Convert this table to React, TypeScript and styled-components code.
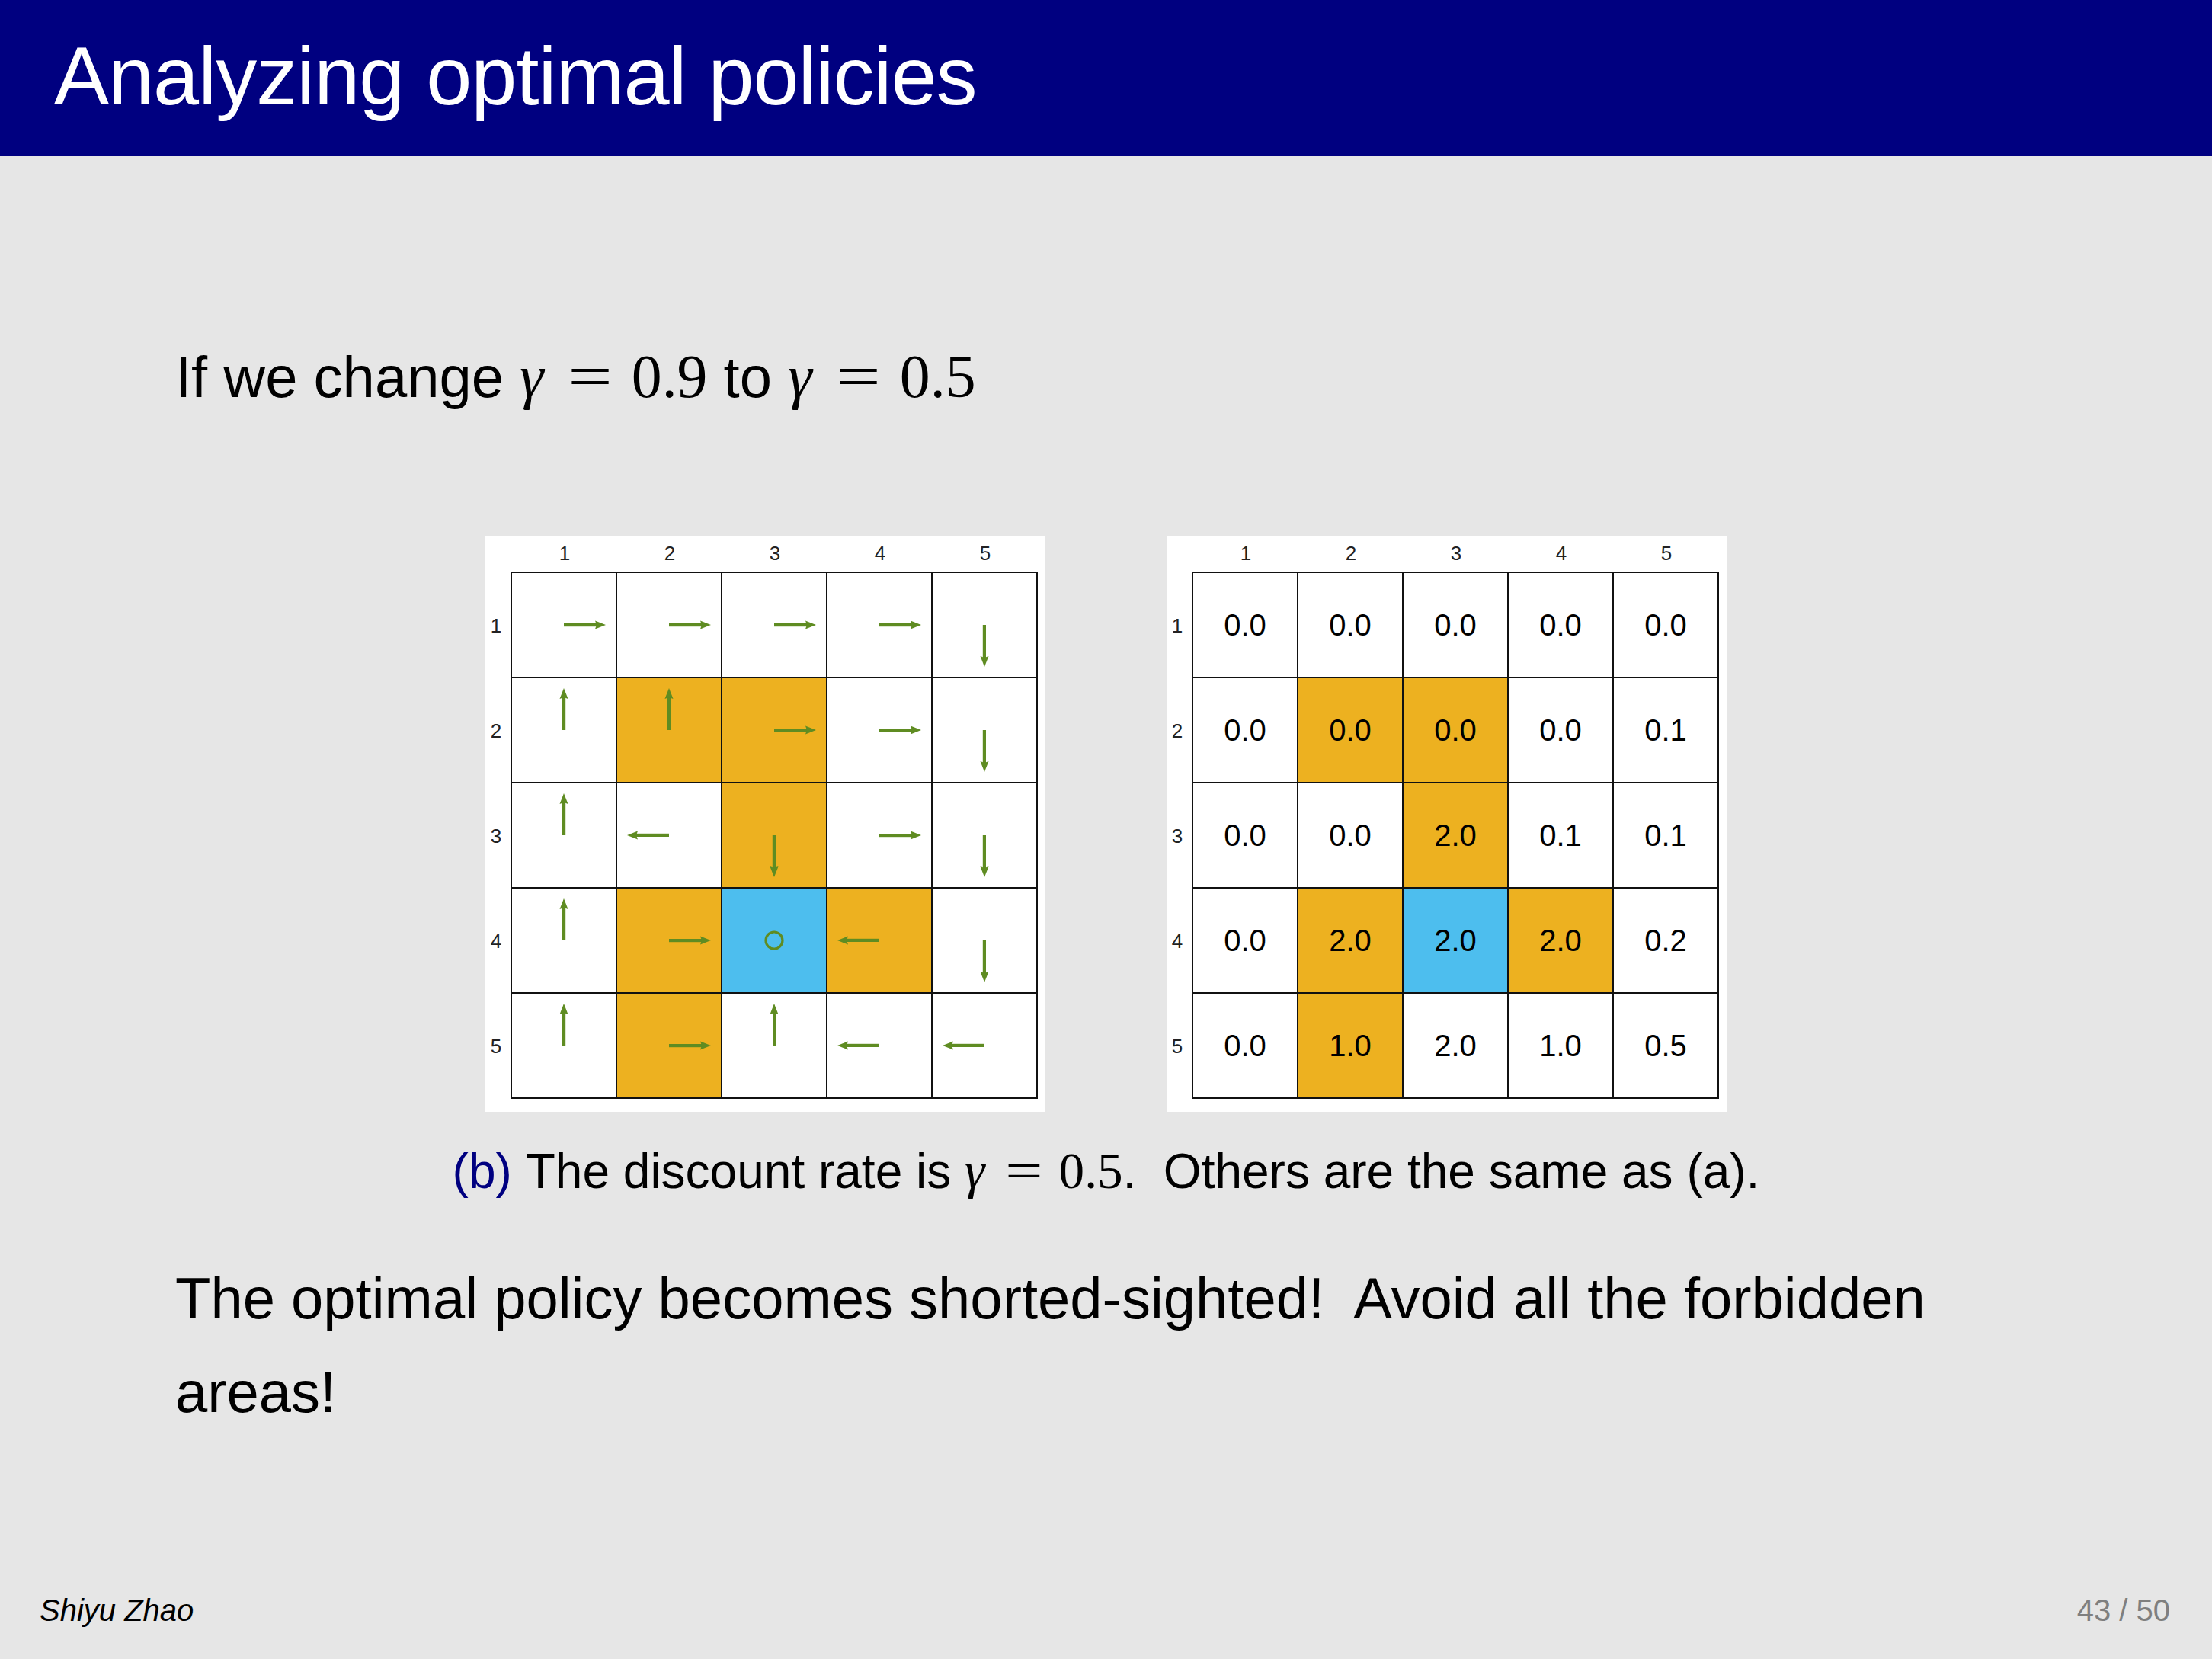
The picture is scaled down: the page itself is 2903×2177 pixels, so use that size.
import styled, { createGlobalStyle } from 'styled-components';

const GlobalStyle = createGlobalStyle`
  body {
    margin: 0;
    background: #e6e6e6;
  }
`;

const sans = `'Liberation Sans', Arial, sans-serif`;
const serif = `'Liberation Serif', 'Times New Roman', serif`;

const ORANGE = '#edb120';
const BLUE = '#4dbeee';
const GREEN = '#5f8c22';

const Slide = styled.div`
  display: flex;
  flex-direction: column;
  min-height: 100vh;
  font-family: ${sans};
  color: #000;
`;

const TitleBar = styled.header`
  height: 205px;
  box-sizing: border-box;
  padding: 46px 0 0 71px;
  background: #000080;

  h1 {
    margin: 0;
    font-size: 108px;
    line-height: 108px;
    font-weight: normal;
    letter-spacing: -1px;
    color: #fff;
  }
`;

const Body = styled.main`
  padding: 0 230px;
`;

const Lead = styled.p`
  margin: 251px 0 0;
  font-size: 76px;
  line-height: 77px;
`;

const Math = styled.span`
  font-family: ${serif};
  font-size: 1.05em;
  white-space: nowrap;

  i {
    font-style: italic;
  }
`;

// TeX's "=" is wider than Times' glyph, so stretch it sideways
const Eq = styled.span`
  display: inline-block;
  margin: 0 0.4em 0 0.48em;
  transform: scaleX(1.3);
`;

const Figures = styled.div`
  display: flex;
  justify-content: center;
  gap: 159px;
  margin-top: 170px;
`;

const Panel = styled.div`
  display: grid;
  grid-template-columns: 33px 692px;
  grid-template-rows: 47px 692px;
  width: 735px;
  height: 756px;
  box-sizing: border-box;
  background: #fff;
  font-size: 26px;
  color: #222;
`;

const ColLabels = styled.div`
  grid-column: 2;
  display: grid;
  grid-template-columns: repeat(5, 138px);
  padding-left: 2px;
  align-items: center;
  text-align: center;
`;

const RowLabels = styled.div`
  grid-column: 1;
  grid-row: 2;
  display: grid;
  grid-template-rows: repeat(5, 138px);
  padding: 2px 5px 0 0;
  align-items: center;
  text-align: center;
`;

const Board = styled.div`
  grid-column: 2;
  grid-row: 2;
  display: grid;
  grid-template-columns: repeat(5, 138px);
  grid-template-rows: repeat(5, 138px);
  border-left: 2px solid #111;
  border-top: 2px solid #111;
`;

const Cell = styled.div<{ $fill: string }>`
  display: flex;
  align-items: center;
  justify-content: center;
  box-sizing: border-box;
  border-right: 2px solid #111;
  border-bottom: 2px solid #111;
  background: ${(p) => p.$fill};
  font-size: 40px;
  color: #000;

  svg {
    width: 136px;
    height: 136px;
  }
`;

const Caption = styled.p`
  margin: 48px 0 0;
  text-align: center;
  font-size: 64px;
  line-height: 60px;

  b {
    font-weight: normal;
    color: #000080;
    margin-right: 0.28em;
  }
`;

const Conclusion = styled.p`
  margin: 75px 0 0;
  max-width: 2440px;
  font-size: 76px;
  line-height: 123px;
`;

const Footer = styled.footer`
  display: flex;
  justify-content: space-between;
  margin-top: auto;
  padding: 0 55px 44px 52px;
  font-size: 40px;
  line-height: 40px;

  em {
    font-style: italic;
  }

  span {
    color: #7f7f7f;
  }
`;

type Dir = 'r' | 'l' | 'u' | 'd' | 'o';

const kinds = [
  ['w', 'w', 'w', 'w', 'w'],
  ['w', 'f', 'f', 'w', 'w'],
  ['w', 'w', 'f', 'w', 'w'],
  ['w', 'f', 't', 'f', 'w'],
  ['w', 'f', 'w', 'w', 'w'],
];

const policy: Dir[][] = [
  ['r', 'r', 'r', 'r', 'd'],
  ['u', 'u', 'r', 'r', 'd'],
  ['u', 'l', 'd', 'r', 'd'],
  ['u', 'r', 'o', 'l', 'd'],
  ['u', 'r', 'u', 'l', 'l'],
];

const values = [
  ['0.0', '0.0', '0.0', '0.0', '0.0'],
  ['0.0', '0.0', '0.0', '0.0', '0.1'],
  ['0.0', '0.0', '2.0', '0.1', '0.1'],
  ['0.0', '2.0', '2.0', '2.0', '0.2'],
  ['0.0', '1.0', '2.0', '1.0', '0.5'],
];

const fillOf = (k: string) => (k === 'f' ? ORANGE : k === 't' ? BLUE : '#fff');

const angle: Record<string, number> = { r: 0, d: 90, l: 180, u: -90 };

function Arrow({ dir }: { dir: Dir }) {
  if (dir === 'o') {
    return (
      <svg viewBox='0 0 136 136'>
        <circle cx='68' cy='68' r='11' fill='none' stroke={GREEN} strokeWidth='3.2' />
      </svg>
    );
  }
  return (
    <svg viewBox='0 0 136 136'>
      <g transform={`rotate(${angle[dir]} 68 68)`} fill={GREEN}>
        <rect x='68' y='66' width='44' height='4.2' />
        <polygon points='109,62.5 123,68 109,73.5 111,68' />
      </g>
    </svg>
  );
}

const idx = [1, 2, 3, 4, 5];

function GridPanel({ render }: { render: (r: number, c: number) => React.ReactNode }) {
  return (
    <Panel>
      <ColLabels>
        {idx.map((n) => (
          <div key={n}>{n}</div>
        ))}
      </ColLabels>
      <RowLabels>
        {idx.map((n) => (
          <div key={n}>{n}</div>
        ))}
      </RowLabels>
      <Board>
        {kinds.map((row, r) =>
          row.map((k, c) => (
            <Cell key={`${r}-${c}`} $fill={fillOf(k)}>
              {render(r, c)}
            </Cell>
          ))
        )}
      </Board>
    </Panel>
  );
}

function Gamma({ v }: { v: string }) {
  return (
    <Math>
      <i>γ</i>
      <Eq>=</Eq>
      {v}
    </Math>
  );
}

export default function App() {
  return (
    <Slide>
      <GlobalStyle />
      <TitleBar>
        <h1>Analyzing optimal policies</h1>
      </TitleBar>
      <Body>
        <Lead>
          If we change <Gamma v='0.9' /> to <Gamma v='0.5' />
        </Lead>
        <Figures>
          <GridPanel render={(r, c) => <Arrow dir={policy[r][c]} />} />
          <GridPanel render={(r, c) => values[r][c]} />
        </Figures>
        <Caption>
          <b>(b)</b>The discount rate is <Gamma v='0.5' />.&nbsp; Others are the same as (a).
        </Caption>
        <Conclusion>
          The optimal policy becomes shorted-sighted!&nbsp; Avoid all the forbidden areas!
        </Conclusion>
      </Body>
      <Footer>
        <em>Shiyu Zhao</em>
        <span>43 / 50</span>
      </Footer>
    </Slide>
  );
}
